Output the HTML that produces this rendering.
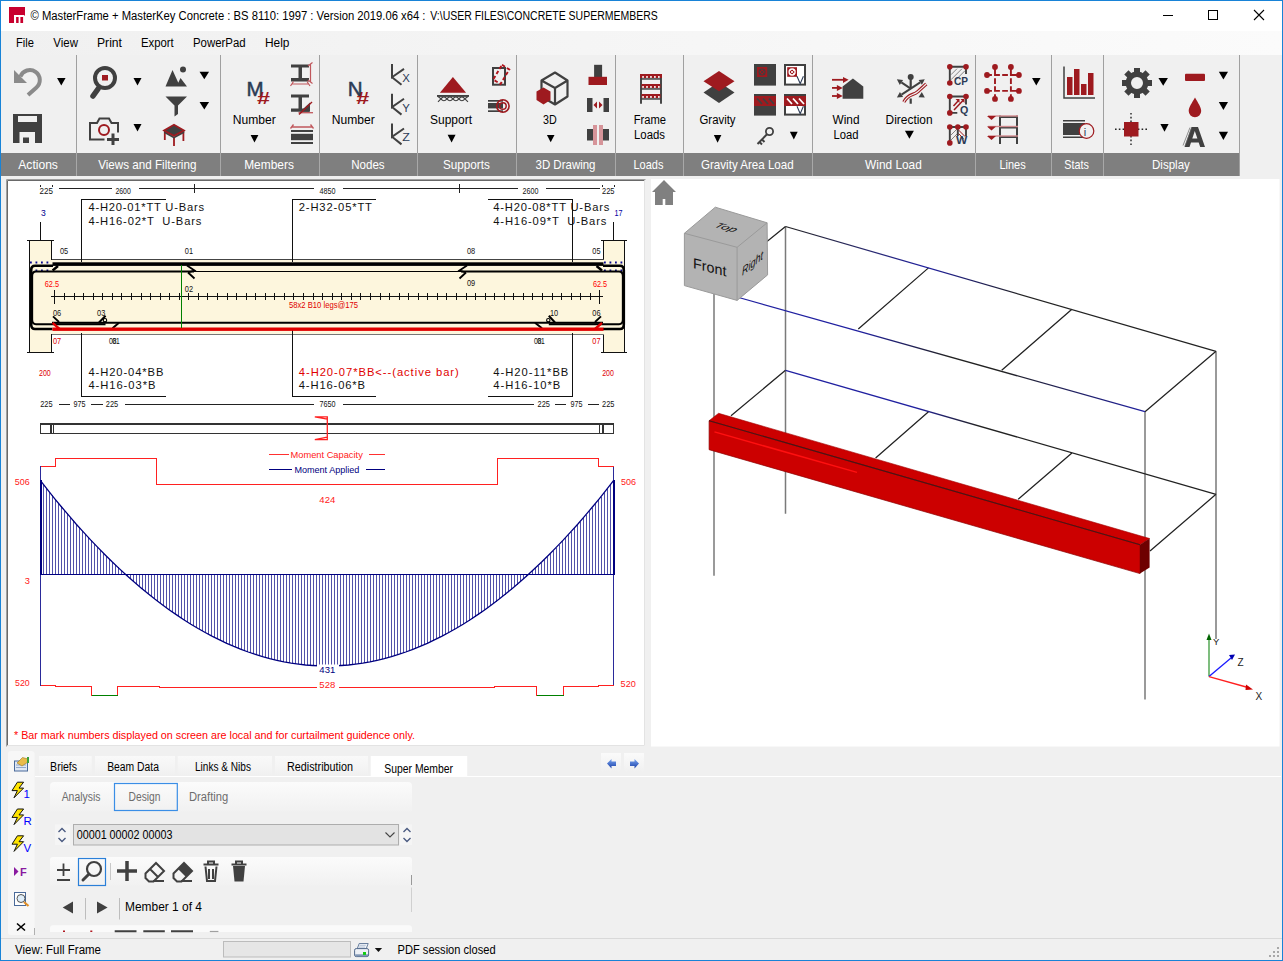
<!DOCTYPE html>
<html><head><meta charset="utf-8"><title>MasterFrame</title>
<style>
html,body{margin:0;padding:0;background:#f0f0f0;}
body{width:1283px;height:961px;overflow:hidden;position:relative;font-family:"Liberation Sans",sans-serif;}
svg{position:absolute;left:0;top:0;}
svg text{font-family:"Liberation Sans",sans-serif;white-space:pre;}
</style></head><body>
<svg width="1283" height="961" viewBox="0 0 1283 961">
<defs>
<linearGradient id="menugrad" x1="0" x2="1" y1="0" y2="0"><stop offset="0" stop-color="#f0f0f0"/><stop offset="1" stop-color="#fbfbfb"/></linearGradient>
<linearGradient id="tabgrad" x1="0" x2="0" y1="0" y2="1"><stop offset="0" stop-color="#f9f9f9"/><stop offset="1" stop-color="#f0f0f0"/></linearGradient>
<linearGradient id="btngrad" x1="0" x2="0" y1="0" y2="1"><stop offset="0" stop-color="#fafafa"/><stop offset="1" stop-color="#f0f0f0"/></linearGradient>
<linearGradient id="subgrad" x1="0" x2="0" y1="0" y2="1"><stop offset="0" stop-color="#fbfbfb"/><stop offset="1" stop-color="#f1f1f1"/></linearGradient>
<linearGradient id="arrowgrad" x1="0" x2="0" y1="0" y2="1"><stop offset="0" stop-color="#7aa6f0"/><stop offset="1" stop-color="#1a3fa8"/></linearGradient>
</defs>
<rect x="1" y="1" width="1281" height="30" fill="#fff"/>
<rect x="1" y="31" width="1281" height="24" fill="url(#menugrad)"/>
<rect x="1" y="55" width="1281" height="124" fill="#f0f0f0"/>
<rect x="1" y="153" width="1239" height="23" fill="#7f7f7f"/>
<rect x="1239" y="55" width="1" height="121" fill="#a0a0a0"/>
<rect x="76" y="55" width="1" height="98" fill="#a0a0a0"/>
<rect x="76" y="153" width="1" height="23" fill="#a8a8a8"/>
<rect x="220" y="55" width="1" height="98" fill="#a0a0a0"/>
<rect x="220" y="153" width="1" height="23" fill="#a8a8a8"/>
<rect x="319" y="55" width="1" height="98" fill="#a0a0a0"/>
<rect x="319" y="153" width="1" height="23" fill="#a8a8a8"/>
<rect x="417" y="55" width="1" height="98" fill="#a0a0a0"/>
<rect x="417" y="153" width="1" height="23" fill="#a8a8a8"/>
<rect x="516" y="55" width="1" height="98" fill="#a0a0a0"/>
<rect x="516" y="153" width="1" height="23" fill="#a8a8a8"/>
<rect x="615" y="55" width="1" height="98" fill="#a0a0a0"/>
<rect x="615" y="153" width="1" height="23" fill="#a8a8a8"/>
<rect x="683" y="55" width="1" height="98" fill="#a0a0a0"/>
<rect x="683" y="153" width="1" height="23" fill="#a8a8a8"/>
<rect x="812" y="55" width="1" height="98" fill="#a0a0a0"/>
<rect x="812" y="153" width="1" height="23" fill="#a8a8a8"/>
<rect x="975" y="55" width="1" height="98" fill="#a0a0a0"/>
<rect x="975" y="153" width="1" height="23" fill="#a8a8a8"/>
<rect x="1051" y="55" width="1" height="98" fill="#a0a0a0"/>
<rect x="1051" y="153" width="1" height="23" fill="#a8a8a8"/>
<rect x="1103" y="55" width="1" height="98" fill="#a0a0a0"/>
<rect x="1103" y="153" width="1" height="23" fill="#a8a8a8"/>
<rect x="0.5" y="0.5" width="1282" height="960" fill="none" stroke="#1883d7" stroke-width="1"/>
<path d="M9 7H25V16L24 15H14V23H9Z" fill="#c8002e"/><rect x="16.1" y="17" width="2.5" height="6" fill="#c8002e"/><rect x="20.4" y="17" width="2.7" height="6" fill="#c8002e"/>
<text x="30.5" y="20" font-size="12.5" fill="#000" textLength="395" lengthAdjust="spacingAndGlyphs">© MasterFrame + MasterKey Concrete : BS 8110: 1997 : Version 2019.06 x64 :</text>
<text x="430.2" y="20" font-size="12.5" fill="#000" textLength="227.6" lengthAdjust="spacingAndGlyphs">V:\USER FILES\CONCRETE SUPERMEMBERS</text>
<rect x="1163" y="15" width="10" height="1" fill="#000"/>
<rect x="1208.5" y="10.5" width="9" height="9" fill="none" stroke="#000" stroke-width="1"/>
<path d="M1254 10L1264 20M1264 10L1254 20" stroke="#000" stroke-width="1.1"/>
<text x="16" y="47" font-size="12.5" fill="#000" textLength="18" lengthAdjust="spacingAndGlyphs">File</text>
<text x="53.3" y="47" font-size="12.5" fill="#000" textLength="24.6" lengthAdjust="spacingAndGlyphs">View</text>
<text x="97" y="47" font-size="12.5" fill="#000" textLength="25" lengthAdjust="spacingAndGlyphs">Print</text>
<text x="141" y="47" font-size="12.5" fill="#000" textLength="32.7" lengthAdjust="spacingAndGlyphs">Export</text>
<text x="193" y="47" font-size="12.5" fill="#000" textLength="52.6" lengthAdjust="spacingAndGlyphs">PowerPad</text>
<text x="265" y="47" font-size="12.5" fill="#000" textLength="24.5" lengthAdjust="spacingAndGlyphs">Help</text>
<text x="18.3" y="168.8" font-size="12.2" fill="#fff" textLength="39.6" lengthAdjust="spacingAndGlyphs">Actions</text>
<text x="98.2" y="168.8" font-size="12.2" fill="#fff" textLength="98.2" lengthAdjust="spacingAndGlyphs">Views and Filtering</text>
<text x="244.2" y="168.8" font-size="12.2" fill="#fff" textLength="49.7" lengthAdjust="spacingAndGlyphs">Members</text>
<text x="351.2" y="168.8" font-size="12.2" fill="#fff" textLength="33.4" lengthAdjust="spacingAndGlyphs">Nodes</text>
<text x="442.9" y="168.8" font-size="12.2" fill="#fff" textLength="46.9" lengthAdjust="spacingAndGlyphs">Supports</text>
<text x="535.5" y="168.8" font-size="12.2" fill="#fff" textLength="60.0" lengthAdjust="spacingAndGlyphs">3D Drawing</text>
<text x="633.5" y="168.8" font-size="12.2" fill="#fff" textLength="29.9" lengthAdjust="spacingAndGlyphs">Loads</text>
<text x="701" y="168.8" font-size="12.2" fill="#fff" textLength="92.7" lengthAdjust="spacingAndGlyphs">Gravity Area Load</text>
<text x="865.1" y="168.8" font-size="12.2" fill="#fff" textLength="56.7" lengthAdjust="spacingAndGlyphs">Wind Load</text>
<text x="999.4" y="168.8" font-size="12.2" fill="#fff" textLength="26.3" lengthAdjust="spacingAndGlyphs">Lines</text>
<text x="1064.3" y="168.8" font-size="12.2" fill="#fff" textLength="24.6" lengthAdjust="spacingAndGlyphs">Stats</text>
<text x="1152" y="168.8" font-size="12.2" fill="#fff" textLength="37.9" lengthAdjust="spacingAndGlyphs">Display</text>
<path d="M14 70V83H27Z" fill="#8a8a8a"/>
<path d="M20.4 76.6A10 10 0 1 1 36.2 87.7L28 95" fill="none" stroke="#8a8a8a" stroke-width="4"/>
<path d="M57.05 78h8.5l-4.25 7.5z" fill="#000"/>
<path d="M13 114H42V143H13Z M18 116V122H37V116Z M19.5 132V143H35V132Z" fill="#404040" fill-rule="evenodd"/>
<rect x="23" y="137.5" width="6" height="5.5" fill="#404040"/>
<circle cx="105" cy="78" r="10" fill="none" stroke="#404040" stroke-width="4"/>
<path d="M98 89L93 96" stroke="#404040" stroke-width="5.5" stroke-linecap="round"/>
<rect x="102" y="75" width="6" height="5.5" fill="#9e1a1f"/>
<path d="M133.5 78h8l-4.0 7.5z" fill="#000"/>
<path d="M104.5 139.5H90V123H97L99.5 118.5H109L111.5 123H118V132.5" fill="none" stroke="#404040" stroke-width="2"/>
<circle cx="104" cy="130" r="5" fill="none" stroke="#9e1a1f" stroke-width="2"/>
<path d="M107 139.5H119M113 133.5V145" stroke="#404040" stroke-width="3"/>
<path d="M133.5 124h8l-4.0 7.5z" fill="#000"/>
<path d="M165.5 86.5L172.5 70L180 86.5Z M176.5 86.5L180.5 78L187 86.5Z" fill="#404040"/>
<circle cx="183" cy="69.5" r="3" fill="#404040"/>
<path d="M199.55 71.7h9.5l-4.75 7.5z" fill="#000"/>
<path d="M165.5 96.5H187L178 105.5V114L174.5 116.5V105.5Z" fill="#404040"/>
<path d="M199.55 102h9.5l-4.75 7.5z" fill="#000"/>
<path d="M164.8 131V140M183.4 131V141M174 137V146" stroke="#9e1a1f" stroke-width="1.8"/>
<path d="M164 130.5L174 136.5L184.2 130.5V133L174 138.5L164 133Z" fill="#404040"/>
<path d="M174 124.8L184 130.4L174 135.8L164 130.4Z" fill="#404040" stroke="#9e1a1f" stroke-width="1.7"/>
<text x="246.5" y="95.8" font-size="20.5" fill="#2b3a55" stroke="#2b3a55" stroke-width="0.5">M</text>
<text x="257" y="103.8" font-size="17" fill="#9e1a1f" textLength="13" lengthAdjust="spacingAndGlyphs" font-weight="bold">#</text>
<text x="232.7" y="124" font-size="12.5" fill="#000" textLength="43" lengthAdjust="spacingAndGlyphs">Number</text>
<path d="M250.6 135h7.8l-3.9 7.6z" fill="#000"/>
<path d="M291 64.5H309V67.5H302V78H309V81.5H291V78H298.5V67.5H291Z" fill="#404040"/>
<path d="M310.5 64.5V81.5M308 66L312.5 62.5M308 80L312.5 83.5M291.5 84H309M293.5 81.5L290.5 86M307 81.5L310 86" stroke="#c0575c" stroke-width="1.2" fill="none"/>
<path d="M291 94.5H309V97.5H302V108.5H309V111.7H291V108.5H298.5V97.5H291Z" fill="#404040"/>
<path d="M300 111.7L310 102.5V111.7Z" fill="#404040"/>
<path d="M298.5 112.7H313" stroke="#c0575c" stroke-width="1.3"/><path d="M299 114.5L312 102" stroke="#9e1a1f" stroke-width="1.4"/>
<path d="M291.5 127H312.5M293.5 124.5L290.5 128.5M310.5 124.5L313.5 128.5" stroke="#c0575c" stroke-width="1.3" fill="none"/>
<rect x="291" y="130" width="22" height="2" fill="#404040"/><rect x="291" y="133.8" width="22" height="6.4" fill="#404040"/><rect x="291" y="142" width="22" height="2" fill="#404040"/>
<text x="347.8" y="96" font-size="20.5" fill="#2b3a55" stroke="#2b3a55" stroke-width="0.5">N</text>
<text x="356.3" y="103.8" font-size="17" fill="#9e1a1f" textLength="13" lengthAdjust="spacingAndGlyphs" font-weight="bold">#</text>
<text x="331.8" y="124" font-size="12.5" fill="#000" textLength="43" lengthAdjust="spacingAndGlyphs">Number</text>
<path d="M392 64.0V77.2L404 68.9M392 77.2L401.5 84.8" fill="none" stroke="#404040" stroke-width="2"/>
<text x="402.3" y="81.8" font-size="11.5" fill="#2b3a55" textLength="7.6" lengthAdjust="spacingAndGlyphs">X</text>
<path d="M392 93.8V107.0L404 98.7M392 107.0L401.5 114.6" fill="none" stroke="#404040" stroke-width="2"/>
<text x="402.3" y="111.6" font-size="11.5" fill="#2b3a55" textLength="7.6" lengthAdjust="spacingAndGlyphs">Y</text>
<path d="M392 123.6V136.8L404 128.5M392 136.8L401.5 144.4" fill="none" stroke="#404040" stroke-width="2"/>
<text x="402.3" y="141.4" font-size="11.5" fill="#2b3a55" textLength="7.6" lengthAdjust="spacingAndGlyphs">Z</text>
<path d="M439.9 92.8L452.9 76.9L466.1 92.8Z" fill="#9e1a1f"/>
<rect x="437" y="95" width="32" height="1.9" fill="#404040"/>
<path d="M438 101.8L440.9 98.8Q443.9 102.6 446.9 98.8Q449.9 102.6 452.9 98.8Q455.9 102.6 458.9 98.8Q461.9 102.6 464.9 98.8L468 101.8M438 96.5L440.9 98.8Q443.9 95 446.9 98.8Q449.9 95 452.9 98.8Q455.9 95 458.9 98.8Q461.9 95 464.9 98.8L468 96.5" fill="none" stroke="#404040" stroke-width="1.1"/>
<text x="430" y="124" font-size="12.5" fill="#000" textLength="42" lengthAdjust="spacingAndGlyphs">Support</text>
<path d="M447.6 134.7h8l-4.0 7.8z" fill="#000"/>
<rect x="493" y="68" width="12" height="16.7" fill="none" stroke="#404040" stroke-width="2"/>
<path d="M502 64.8L509.3 69.5L500.5 84L493.2 79.5Z" fill="none" stroke="#b0141c" stroke-width="1.9" stroke-dasharray="3.6 2.2"/>
<rect x="488" y="100" width="15" height="1.7" fill="#404040"/><rect x="488" y="103" width="15" height="5.4" fill="#404040"/><rect x="488" y="110.3" width="15" height="1.7" fill="#404040"/>
<circle cx="502.9" cy="106" r="6.2" fill="none" stroke="#9e1a1f" stroke-width="1.6"/><circle cx="502.9" cy="106" r="3.3" fill="none" stroke="#9e1a1f" stroke-width="1.5"/>
<path d="M541.5 80.5L555 72.5L567.5 80.5V96.5L555 104.5L541.5 96.5Z M541.5 80.5L555 88V104.5 M555 88L567.5 80.5" fill="none" stroke="#404040" stroke-width="2.2" stroke-linejoin="round"/>
<path d="M543.5 87.5L550.5 91.5V100L543.5 104.5L536.5 100V91.5Z" fill="#9e1a1f"/>
<text x="543" y="124" font-size="12.5" fill="#000" textLength="13.7" lengthAdjust="spacingAndGlyphs">3D</text>
<path d="M546.9000000000001 135h7.6l-3.8 7.3z" fill="#000"/>
<rect x="594.1" y="64.8" width="8" height="12.5" fill="#404040"/><rect x="588.5" y="76.8" width="18.5" height="8.2" fill="#9e1a1f"/>
<rect x="587" y="98" width="5.5" height="14" fill="#404040"/><rect x="603.5" y="98" width="5.5" height="14" fill="#404040"/><path d="M593.5 105L597 101.5V108.5Z M602.5 105L599 101.5V108.5Z" fill="#9e1a1f"/>
<rect x="587" y="129" width="22" height="11.5" fill="#404040"/><rect x="593" y="125" width="4" height="20" fill="#d69499"/><rect x="599" y="125" width="4" height="20" fill="#d69499"/><rect x="597" y="125" width="2" height="20" fill="#f0f0f0"/>
<path d="M641 78V103.8M661 78V103.8" stroke="#404040" stroke-width="1.9"/>
<rect x="640" y="74" width="22" height="4" fill="#9e1a1f"/>
<rect x="642.20" y="76.1" width="1.7" height="1.7" fill="#fff"/>
<rect x="646.15" y="76.1" width="1.7" height="1.7" fill="#fff"/>
<rect x="650.10" y="76.1" width="1.7" height="1.7" fill="#fff"/>
<rect x="654.05" y="76.1" width="1.7" height="1.7" fill="#fff"/>
<rect x="658.00" y="76.1" width="1.7" height="1.7" fill="#fff"/>
<rect x="641" y="78.2" width="20" height="1.5" fill="#404040"/>
<rect x="641.5" y="84" width="19" height="4" fill="#9e1a1f"/>
<rect x="642.20" y="86.1" width="1.7" height="1.7" fill="#fff"/>
<rect x="646.15" y="86.1" width="1.7" height="1.7" fill="#fff"/>
<rect x="650.10" y="86.1" width="1.7" height="1.7" fill="#fff"/>
<rect x="654.05" y="86.1" width="1.7" height="1.7" fill="#fff"/>
<rect x="658.00" y="86.1" width="1.7" height="1.7" fill="#fff"/>
<rect x="641" y="88.2" width="20" height="1.5" fill="#404040"/>
<rect x="641.5" y="94" width="19" height="4" fill="#9e1a1f"/>
<rect x="642.20" y="96.1" width="1.7" height="1.7" fill="#fff"/>
<rect x="646.15" y="96.1" width="1.7" height="1.7" fill="#fff"/>
<rect x="650.10" y="96.1" width="1.7" height="1.7" fill="#fff"/>
<rect x="654.05" y="96.1" width="1.7" height="1.7" fill="#fff"/>
<rect x="658.00" y="96.1" width="1.7" height="1.7" fill="#fff"/>
<rect x="641" y="98.2" width="20" height="1.5" fill="#404040"/>
<text x="633.7" y="123.6" font-size="12.5" fill="#000" textLength="32.3" lengthAdjust="spacingAndGlyphs">Frame</text>
<text x="634" y="138.9" font-size="12.5" fill="#000" textLength="31" lengthAdjust="spacingAndGlyphs">Loads</text>
<path d="M703.5 92.5L719 82L734.5 92.5L719 103Z" fill="#404040"/>
<path d="M703.5 81.3L719 71L734.5 81.3L719 91.3Z" fill="#9e1a1f"/>
<text x="699.5" y="124" font-size="12.5" fill="#000" textLength="36" lengthAdjust="spacingAndGlyphs">Gravity</text>
<path d="M713.85 135h7.5l-3.75 7.7z" fill="#000"/>
<rect x="754" y="64" width="22" height="21.6" fill="#404040"/><rect x="757" y="67" width="10.2" height="10" fill="#9e1a1f"/><circle cx="762.1" cy="72" r="3" fill="none" stroke="#404040" stroke-width="1.1"/><path d="M760 69.9L764.2 74.1M764.2 69.9L760 74.1" stroke="#404040" stroke-width="0.9"/>
<rect x="785" y="65" width="20" height="19.6" fill="#fff" stroke="#404040" stroke-width="2"/><rect x="787.2" y="67.2" width="9.8" height="9.6" fill="#9e1a1f"/><circle cx="792.1" cy="72" r="3" fill="none" stroke="#fff" stroke-width="1.3"/><path d="M790.2 70.1L794 73.9M794 70.1L790.2 73.9" stroke="#fff" stroke-width="0.9"/>
<path d="M797 76.3L800.2 83.7L803.4 76.3" fill="none" stroke="#2b3a55" stroke-width="1.1"/>
<rect x="754" y="94" width="22" height="21.6" fill="#404040"/><rect x="754" y="96" width="22" height="10" fill="#9e1a1f"/>
<path d="M757 98.5L762 104M763 98.5L768 104M769 98.5L774 104" stroke="#404040" stroke-width="1.8"/>
<rect x="785" y="95" width="20" height="19.6" fill="#fff" stroke="#404040" stroke-width="2"/><rect x="784" y="96" width="22" height="10" fill="#9e1a1f"/>
<path d="M787 98.5L792 104M793 98.5L798 104M799 98.5L804 104" stroke="#fff" stroke-width="1.8"/>
<path d="M797 106.3L800.2 113.7L803.4 106.3" fill="none" stroke="#2b3a55" stroke-width="1.1"/>
<circle cx="769.5" cy="131.5" r="3.6" fill="none" stroke="#404040" stroke-width="1.8"/><path d="M767 134.3L757.5 144M759.5 142L762 144.5M762 139.5L764.5 142" stroke="#404040" stroke-width="2"/>
<path d="M789.9 131.8h7.8l-3.9 7.8z" fill="#000"/>
<path d="M842.6 98.8V86.6L852.9 78.5L863.3 86.6V98.8Z" fill="#404040"/>
<path d="M832 79.8H844" stroke="#9e1a1f" stroke-width="1.8"/><path d="M843 76.9L848.6 79.8L843 83Z" fill="#9e1a1f"/>
<path d="M832 87.9H838" stroke="#9e1a1f" stroke-width="1.8"/><path d="M836.9 84.9L842.8 87.9L836.9 90.9Z" fill="#9e1a1f"/>
<path d="M832 96H838" stroke="#9e1a1f" stroke-width="1.8"/><path d="M836.9 93L842.8 96L836.9 99Z" fill="#9e1a1f"/>
<text x="832.5" y="124" font-size="12.5" fill="#000" textLength="27" lengthAdjust="spacingAndGlyphs">Wind</text>
<text x="833.5" y="138.9" font-size="12.5" fill="#000" textLength="25" lengthAdjust="spacingAndGlyphs">Load</text>
<path d="M910.7 77V88.7M910.7 98.4V103.7" stroke="#404040" stroke-width="2.2"/>
<circle cx="910.7" cy="76.9" r="3" fill="#404040"/>
<path d="M910.7 88.7L901.4 82.4" stroke="#404040" stroke-width="2"/>
<path d="M896.9 79.3L903.1 79.9L899.8 84.9Z" fill="#404040"/>
<path d="M910.7 88.7L920.2 82.4" stroke="#404040" stroke-width="2"/>
<path d="M924.8 79.3L921.9 84.8L918.6 79.9Z" fill="#404040"/>
<path d="M910.7 88.7L901.5 94.6" stroke="#404040" stroke-width="2"/>
<path d="M896.9 97.6L899.9 92.1L903.1 97.1Z" fill="#404040"/>
<path d="M924.8 97.6L918.5 97.2L921.8 92.1Z" fill="#404040"/>
<path d="M903.8 102C909 93 913 96 918 91.5S924 86 926.3 84" fill="none" stroke="#9e1a1f" stroke-width="3.4"/><path d="M903.8 102C909 93 913 96 918 91.5S924 86 926.3 84" fill="none" stroke="#f0f0f0" stroke-width="1.2"/>
<text x="885.6" y="124" font-size="12.5" fill="#000" textLength="47" lengthAdjust="spacingAndGlyphs">Direction</text>
<path d="M904.9 130.7h9l-4.5 8z" fill="#000"/>
<path d="M951 74.7L957 68.7M951 79.7L962 68.7M956 79.7L965 70.7" stroke="#777" stroke-width="0.9"/>
<path d="M949.8 83.0V66.7H966V74.0" fill="none" stroke="#404040" stroke-width="1.9"/>
<circle cx="949.8" cy="66.7" r="2.8" fill="#9e1a1f"/>
<circle cx="966" cy="66.7" r="2.8" fill="#9e1a1f"/>
<circle cx="949.8" cy="83.0" r="2.8" fill="#9e1a1f"/>
<text x="954" y="84.5" font-size="11.5" fill="#2b3a55" textLength="14" lengthAdjust="spacingAndGlyphs" font-weight="bold">CP</text>
<path d="M957.3 112.9H949.8V96.5H966V104.5" fill="none" stroke="#404040" stroke-width="1.9"/>
<path d="M953.5 106.0L958.5 100.5M954 110.0L963 100.5" stroke="#9e1a1f" stroke-width="1.5"/><path d="M955.5 99.0L959.5 99.0L959.5 103.0Z M960.5 99.0L964.5 99.0L964.5 103.0Z" fill="#9e1a1f"/>
<circle cx="949.8" cy="96.5" r="2.8" fill="#9e1a1f"/>
<circle cx="966" cy="96.5" r="2.8" fill="#9e1a1f"/>
<circle cx="949.8" cy="112.9" r="2.8" fill="#9e1a1f"/>
<text x="960" y="114" font-size="11.5" fill="#2b3a55" textLength="8.3" lengthAdjust="spacingAndGlyphs" font-weight="bold">Q</text>
<path d="M951 135L957 129M951 140L957 134" stroke="#777" stroke-width="0.9"/><path d="M958.5 130L965 136.5M958.5 133.5L963.5 138.5" stroke="#9e1a1f" stroke-width="1"/>
<path d="M949.8 142.9V127H966V136M957.8 127V136" fill="none" stroke="#404040" stroke-width="1.9"/>
<circle cx="949.8" cy="127" r="2.8" fill="#9e1a1f"/>
<circle cx="966" cy="127" r="2.8" fill="#9e1a1f"/>
<circle cx="949.8" cy="142.9" r="2.8" fill="#9e1a1f"/>
<circle cx="957.8" cy="127" r="2.8" fill="#9e1a1f"/>
<text x="955.9" y="144.3" font-size="11.5" fill="#2b3a55" textLength="11.3" lengthAdjust="spacingAndGlyphs" font-weight="bold">W</text>
<circle cx="995" cy="67" r="2.9" fill="#9e1a1f"/>
<circle cx="1010.9" cy="67" r="2.9" fill="#9e1a1f"/>
<circle cx="987" cy="75" r="2.9" fill="#9e1a1f"/>
<circle cx="1018.9" cy="75" r="2.9" fill="#9e1a1f"/>
<circle cx="987" cy="90.9" r="2.9" fill="#9e1a1f"/>
<circle cx="1018.9" cy="90.9" r="2.9" fill="#9e1a1f"/>
<circle cx="995" cy="98.9" r="2.9" fill="#9e1a1f"/>
<circle cx="1010.9" cy="98.9" r="2.9" fill="#9e1a1f"/>
<path d="M995 67V75H999.9M987 75H991.9M1002.2 75H1007.9M1010.9 67V75H1018.9M995 78.3V83.9M1010.9 78.3V83.9M995 86.2V90.9H999.9M987 90.9H991.9M1002.2 90.9H1007.9M1010.9 86.2V90.9H1018.9M995 94.2V98.9M1010.9 94.2V98.9" fill="none" stroke="#9e1a1f" stroke-width="1.9"/>
<path d="M1032.05 77.9h8.5l-4.25 7.6z" fill="#000"/>
<path d="M1000 115.5V144M1017 115.5V144M1000 117H1017M1000 127.5H1017M1000 137H1017" stroke="#404040" stroke-width="2"/>
<path d="M988 116H1018" stroke="#d08a8e" stroke-width="1.4"/><path d="M987 116H996L991.5 120Z" fill="#9e1a1f"/>
<path d="M988 126.5H1018" stroke="#d08a8e" stroke-width="1.4"/><path d="M987 126.5H996L991.5 130.5Z" fill="#9e1a1f"/>
<path d="M988 136H1018" stroke="#d08a8e" stroke-width="1.4"/><path d="M987 136H996L991.5 140Z" fill="#9e1a1f"/>
<path d="M1064 66.5V98H1095" fill="none" stroke="#404040" stroke-width="1.5"/>
<rect x="1067" y="77" width="5.5" height="18" fill="#9e1a1f"/>
<rect x="1074" y="69" width="5.5" height="26" fill="#9e1a1f"/>
<rect x="1081" y="84" width="5.5" height="11" fill="#9e1a1f"/>
<rect x="1088" y="73" width="5.5" height="22" fill="#9e1a1f"/>
<rect x="1063" y="120" width="22" height="1.5" fill="#404040"/><rect x="1063" y="123" width="22" height="12" fill="#404040"/><rect x="1063" y="136.5" width="22" height="1.5" fill="#404040"/>
<circle cx="1086.5" cy="131" r="7.3" fill="#f0f0f0" stroke="#9e1a1f" stroke-width="1.2"/>
<text x="1083.8" y="136" font-size="11" fill="#2b3a55">i</text>
<rect x="1134" y="68" width="6" height="6" fill="#404040" transform="rotate(0 1137 83)"/><rect x="1134" y="68" width="6" height="6" fill="#404040" transform="rotate(45 1137 83)"/><rect x="1134" y="68" width="6" height="6" fill="#404040" transform="rotate(90 1137 83)"/><rect x="1134" y="68" width="6" height="6" fill="#404040" transform="rotate(135 1137 83)"/><rect x="1134" y="68" width="6" height="6" fill="#404040" transform="rotate(180 1137 83)"/><rect x="1134" y="68" width="6" height="6" fill="#404040" transform="rotate(225 1137 83)"/><rect x="1134" y="68" width="6" height="6" fill="#404040" transform="rotate(270 1137 83)"/><rect x="1134" y="68" width="6" height="6" fill="#404040" transform="rotate(315 1137 83)"/>
<circle cx="1137" cy="83" r="8.7" fill="none" stroke="#404040" stroke-width="5.4"/>
<path d="M1158.45 78h9.5l-4.75 7.8z" fill="#000"/>
<path d="M1131 113V145M1115 129.3H1147" stroke="#222" stroke-width="1.4" stroke-dasharray="1.6 2.2"/>
<rect x="1124" y="122" width="14.5" height="14.5" fill="#9e1a1f"/>
<path d="M1160.4 124h8.2l-4.1 7.8z" fill="#000"/>
<rect x="1185" y="73.7" width="20" height="7.2" rx="1" fill="#9e1a1f"/>
<path d="M1218.8000000000002 71.8h9.2l-4.6 7.8z" fill="#000"/>
<path d="M1195 97.5C1192 103 1188.7 107 1188.7 111A6.2 6.2 0 0 0 1201.2 111C1201.2 107 1198 103 1195 97.5Z" fill="#9e1a1f"/>
<path d="M1218.8000000000002 102h9.2l-4.6 8z" fill="#000"/>
<path d="M1184.5 147L1191.5 127H1198L1205 147H1200.2L1198.7 142.5H1191L1189.5 147Z M1192.3 138.5H1197.4L1194.8 131Z" fill="#404040" fill-rule="evenodd"/>
<path d="M1183 145.5L1190 127.5M1185 146L1191.5 128" stroke="#666" stroke-width="0.7"/>
<path d="M1218.8000000000002 131.8h9.2l-4.6 8.2z" fill="#000"/>
<rect x="6" y="179" width="639" height="567" fill="#fff"/>
<path d="M6 746V179H645" fill="none" stroke="#a0a0a0" stroke-width="1" transform="translate(0.5 0.5)"/>
<path d="M7 745V180H644" fill="none" stroke="#696969" stroke-width="1" transform="translate(0.5 0.5)"/>
<path d="M644 180V745H7" fill="none" stroke="#e3e3e3" stroke-width="1" transform="translate(0.5 0.5)"/>
<g shape-rendering="crispEdges">
<path d="M58.5 188.5H112M138.5 188.5H314M342.5 188.5H518M545.5 188.5H599.5" stroke="#222" stroke-width="1.2"/>
<path d="M194.5 184V192.5M459.5 184V192.5" stroke="#222" stroke-width="1.2"/>
<path d="M40.5 184.8V186.8M52.5 184.8V186.8M602.5 184.8V186.8M614.5 184.8V186.8" stroke="#222" stroke-width="1"/>
</g>
<text x="39.6" y="194" font-size="8.6" fill="#111" textLength="13.4" lengthAdjust="spacingAndGlyphs">225</text>
<text x="115.4" y="194" font-size="8.6" fill="#111" textLength="15.4" lengthAdjust="spacingAndGlyphs">2600</text>
<text x="319.5" y="194" font-size="8.6" fill="#111" textLength="16" lengthAdjust="spacingAndGlyphs">4850</text>
<text x="522.5" y="194" font-size="8.6" fill="#111" textLength="15.9" lengthAdjust="spacingAndGlyphs">2600</text>
<text x="602" y="194" font-size="8.6" fill="#111" textLength="12.5" lengthAdjust="spacingAndGlyphs">225</text>
<path d="M58.5 404.5H69.5M91.3 404.5H103M124.8 404.5H314M342.5 404.5H533.5M555 404.5H566.2M587.6 404.5H599" stroke="#222" stroke-width="1.2" shape-rendering="crispEdges"/>
<text x="40.2" y="407" font-size="8.6" fill="#111" textLength="12.4" lengthAdjust="spacingAndGlyphs">225</text>
<text x="73.4" y="407" font-size="8.6" fill="#111" textLength="12" lengthAdjust="spacingAndGlyphs">975</text>
<text x="105.8" y="407" font-size="8.6" fill="#111" textLength="12.4" lengthAdjust="spacingAndGlyphs">225</text>
<text x="319.5" y="407" font-size="8.6" fill="#111" textLength="16" lengthAdjust="spacingAndGlyphs">7650</text>
<text x="537.5" y="407" font-size="8.6" fill="#111" textLength="12.4" lengthAdjust="spacingAndGlyphs">225</text>
<text x="570.5" y="407" font-size="8.6" fill="#111" textLength="12" lengthAdjust="spacingAndGlyphs">975</text>
<text x="602" y="407" font-size="8.6" fill="#111" textLength="12.4" lengthAdjust="spacingAndGlyphs">225</text>
<rect x="29.5" y="240.5" width="22.200000000000003" height="111.6" fill="#fdf6dd"/>
<rect x="603" y="240.5" width="21.700000000000045" height="111.6" fill="#fdf6dd"/>
<rect x="29.5" y="259.5" width="595.2" height="74.5" fill="#fdf6dd"/>
<g shape-rendering="crispEdges" stroke="#111" fill="none">
<path d="M29.5 240.5V352.5M51.5 240.5V259.5M51.5 333.5V352.5M27 240.5H54M27 352.5H54" stroke-width="1.3"/>
<path d="M603.5 240.5V259.5M603.5 333.5V352.5M624.5 240.5V352.5M600.5 240.5H627M600.5 352.5H627" stroke-width="1.3"/>
<path d="M40.5 222V240.5M613.5 221.5V240.5" stroke-width="1.2"/>
<path d="M51.5 259.5H603.5" stroke-width="1.2" stroke="#444"/><path d="M51.5 334.5H603.5" stroke-width="1.2" stroke="#777"/>
<path d="M81.5 262V199.5H166M292.5 262V199.5H376M488 199.5H572.5V262" stroke-width="1.3"/>
<path d="M81.5 333V396.5H166M292.5 329V396.5H376M488 396.5H572.5V333" stroke-width="1.3"/>
</g>
<text x="41" y="215.8" font-size="8.6" fill="#000090">3</text>
<text x="614.5" y="215.5" font-size="8.6" fill="#0000a0" textLength="8" lengthAdjust="spacingAndGlyphs">17</text>
<path d="M30 262.5H51M30 270.5H51" stroke="#0a0a90" stroke-width="2" stroke-dasharray="1.8 3.7"/>
<path d="M604 262.5H624M604 270.5H624" stroke="#0a0a90" stroke-width="2" stroke-dasharray="1.8 3.7"/>
<rect x="52.5" y="262.3" width="551" height="3.6" fill="#000"/>
<path d="M53 265.8H35Q31.2 265.8 31.2 270V324.5Q31.2 329 35 329H52.5" fill="none" stroke="#000" stroke-width="2.6"/>
<path d="M57 271.5H36Q32.2 271.5 32.2 276V319.5Q32.2 324.2 36 324.2H105.5" fill="none" stroke="#000" stroke-width="1.9"/>
<path d="M603 265.8H620Q623.8 265.8 623.8 270V324.5Q623.8 329 620 329H603" fill="none" stroke="#000" stroke-width="2.6"/>
<path d="M598 271.5H619Q622.8 271.5 622.8 276V319.5Q622.8 324.2 619 324.2H548.8" fill="none" stroke="#000" stroke-width="1.9"/>
<path d="M52.6 270.5L58 266" stroke="#000" stroke-width="2.4"/>
<path d="M602 270.5L596.5 266" stroke="#000" stroke-width="2.4"/>
<path d="M57 271.5H194M461 271.5H598" stroke="#000" stroke-width="2"/>
<path d="M194 271.5H461" stroke="#000" stroke-width="1"/>
<path d="M187 265.5L194.5 270.5L188 272.5M188 272.5L194.5 278.5" fill="none" stroke="#000" stroke-width="1.8"/>
<path d="M467 265.5L459.5 270.5L466 272.5M466 272.5L459.5 278.5" fill="none" stroke="#000" stroke-width="1.8"/>
<path d="M52 322.8H603" stroke="#000" stroke-width="1.9"/>
<path d="M53 316.3L59 322" stroke="#000" stroke-width="1.8"/>
<path d="M601 316.3L595 322" stroke="#000" stroke-width="1.8"/>
<path d="M99 322.5L105.6 315.8" stroke="#000" stroke-width="2"/><circle cx="105" cy="320.2" r="1.7" fill="none" stroke="#000" stroke-width="1.1"/>
<path d="M555 322.5L548.8 315.8" stroke="#000" stroke-width="2"/><circle cx="548.3" cy="320.2" r="1.7" fill="none" stroke="#000" stroke-width="1.1"/>
<path d="M112.5 328.3L119 322.8M542 328.3L535 322.8" stroke="#000" stroke-width="2"/>
<rect x="52.5" y="327.5" width="551" height="3.4" fill="#e00000"/>
<path d="M52.6 322.8L59.5 329M602 322.8L595 329" stroke="#e00000" stroke-width="2.4"/>
<g shape-rendering="crispEdges" stroke="#111">
<path d="M51 296.5H603" stroke-width="1.2"/>
<path d="M54.5 289.5V304M64.5 293V300M74.5 293V300M83.5 293V300M93.5 293V300M102.5 293V300M112.5 293V300M121.5 293V300M131.5 293V300M141.5 293V300M150.5 293V300M160.5 293V300M169.5 293V300M179.5 293V300M188.5 293V300M198.5 293V300M207.5 293V300M217.5 293V300M227.5 293V300M236.5 293V300M246.5 293V300M255.5 293V300M265.5 293V300M274.5 293V300M284.5 293V300M293.5 293V300M303.5 293V300M313.5 293V300M322.5 293V300M332.5 293V300M341.5 293V300M351.5 293V300M360.5 293V300M370.5 293V300M380.5 293V300M389.5 293V300M399.5 293V300M408.5 293V300M418.5 293V300M427.5 293V300M437.5 293V300M446.5 293V300M456.5 293V300M466.5 293V300M475.5 293V300M485.5 293V300M494.5 293V300M504.5 293V300M513.5 293V300M523.5 293V300M532.5 293V300M542.5 293V300M552.5 293V300M561.5 293V300M571.5 293V300M580.5 293V300M590.5 293V300M599.5 289.5V304" stroke-width="1"/>
</g>
<path d="M181.5 264.5V328" stroke="#008000" stroke-width="1.2" shape-rendering="crispEdges"/>
<text x="44.8" y="287" font-size="8.6" fill="#ff0000" textLength="14.2" lengthAdjust="spacingAndGlyphs">62.5</text>
<text x="592.9" y="287" font-size="8.6" fill="#ff0000" textLength="14.2" lengthAdjust="spacingAndGlyphs">62.5</text>
<text x="60" y="254.3" font-size="8.6" fill="#111" textLength="8.2" lengthAdjust="spacingAndGlyphs">05</text>
<text x="184.8" y="254.3" font-size="8.6" fill="#111" textLength="8.2" lengthAdjust="spacingAndGlyphs">01</text>
<text x="467" y="254.3" font-size="8.6" fill="#111" textLength="8.2" lengthAdjust="spacingAndGlyphs">08</text>
<text x="592.3" y="254.3" font-size="8.6" fill="#111" textLength="8.2" lengthAdjust="spacingAndGlyphs">05</text>
<text x="184.8" y="292" font-size="8.6" fill="#111" textLength="8.2" lengthAdjust="spacingAndGlyphs">02</text>
<text x="467" y="285.5" font-size="8.6" fill="#111" textLength="8.2" lengthAdjust="spacingAndGlyphs">09</text>
<text x="53" y="316" font-size="8.6" fill="#111" textLength="8.2" lengthAdjust="spacingAndGlyphs">06</text>
<text x="97.1" y="316" font-size="8.6" fill="#111" textLength="8.2" lengthAdjust="spacingAndGlyphs">03</text>
<text x="550" y="316" font-size="8.6" fill="#111" textLength="8.2" lengthAdjust="spacingAndGlyphs">10</text>
<text x="592.3" y="316" font-size="8.6" fill="#111" textLength="8.2" lengthAdjust="spacingAndGlyphs">06</text>
<text x="53" y="343.8" font-size="8.6" fill="#e00000" textLength="8.2" lengthAdjust="spacingAndGlyphs">07</text>
<text x="592.3" y="343.8" font-size="8.6" fill="#e00000" textLength="8.2" lengthAdjust="spacingAndGlyphs">07</text>
<text x="109" y="343.8" font-size="8.6" fill="#111" textLength="7.6" lengthAdjust="spacingAndGlyphs">08</text>
<text x="112.2" y="343.8" font-size="8.6" fill="#111" textLength="7.4" lengthAdjust="spacingAndGlyphs">01</text>
<text x="534" y="343.8" font-size="8.6" fill="#111" textLength="7.6" lengthAdjust="spacingAndGlyphs">08</text>
<text x="537.2" y="343.8" font-size="8.6" fill="#111" textLength="7.4" lengthAdjust="spacingAndGlyphs">01</text>
<text x="289" y="308" font-size="8.6" fill="#e00000" textLength="69" lengthAdjust="spacingAndGlyphs">58x2 B10 legs@175</text>
<text x="39" y="375.5" font-size="8.6" fill="#e00000" textLength="11.7" lengthAdjust="spacingAndGlyphs">200</text>
<text x="602.2" y="375.5" font-size="8.6" fill="#e00000" textLength="11.7" lengthAdjust="spacingAndGlyphs">200</text>
<text x="88.4" y="211" font-size="11.2" fill="#111" textLength="115.6" lengthAdjust="spacing">4-H20-01*TT U-Bars</text>
<text x="88.4" y="224.6" font-size="11.2" fill="#111" textLength="113" lengthAdjust="spacing">4-H16-02*T  U-Bars</text>
<text x="298.75" y="211" font-size="11.2" fill="#111" textLength="73.2" lengthAdjust="spacing">2-H32-05*TT</text>
<text x="493.3" y="211" font-size="11.2" fill="#111" textLength="116" lengthAdjust="spacing">4-H20-08*TT U-Bars</text>
<text x="493.3" y="224.6" font-size="11.2" fill="#111" textLength="113" lengthAdjust="spacing">4-H16-09*T  U-Bars</text>
<text x="88.4" y="376" font-size="11.2" fill="#111" textLength="75" lengthAdjust="spacing">4-H20-04*BB</text>
<text x="88.4" y="388.7" font-size="11.2" fill="#111" textLength="67" lengthAdjust="spacing">4-H16-03*B</text>
<text x="298.75" y="376" font-size="11.2" fill="#e00000" textLength="160" lengthAdjust="spacing">4-H20-07*BB&lt;--(active bar)</text>
<text x="298.75" y="388.7" font-size="11.2" fill="#111" textLength="66.3" lengthAdjust="spacing">4-H16-06*B</text>
<text x="493.3" y="376" font-size="11.2" fill="#111" textLength="75" lengthAdjust="spacing">4-H20-11*BB</text>
<text x="493.3" y="388.7" font-size="11.2" fill="#111" textLength="67" lengthAdjust="spacing">4-H16-10*B</text>
<g shape-rendering="crispEdges" fill="none" stroke="#333">
<rect x="40.5" y="424" width="573" height="9.3" stroke-width="1.2"/>
<path d="M50.5 423.5V433.5M51.5 423.5V433.5M53.5 423.5V433.5M599.5 423.5V433.5M602.5 423.5V433.5M603.5 423.5V433.5" stroke-width="1"/>
</g>
<path d="M314.8 416.8H327.3V439.6H314.8M314.8 416.8L327.3 419.2M314.8 439.6L327.3 437.2" fill="none" stroke="#ff2020" stroke-width="1.3"/>
<path d="M43.5 484.0V574.6M46.5 487.8V574.6M49.5 491.6V574.6M52.5 495.3V574.6M55.5 499.0V574.6M58.5 502.7V574.6M61.5 506.3V574.6M64.5 509.9V574.6M67.5 513.4V574.6M70.5 516.9V574.6M73.5 520.4V574.6M76.5 523.8V574.6M79.5 527.2V574.6M82.5 530.5V574.6M85.5 533.8V574.6M88.5 537.1V574.6M91.5 540.3V574.6M94.5 543.5V574.6M97.5 546.6V574.6M100.5 549.7V574.6M103.5 552.8V574.6M106.5 555.8V574.6M109.5 558.7V574.6M112.5 561.7V574.6M115.5 564.6V574.6M118.5 567.4V574.6M121.5 570.2V574.6M124.5 573.0V574.6M127.5 575.7V574.6M130.5 578.4V574.6M133.5 581.1V574.6M136.5 583.7V574.6M139.5 586.2V574.6M142.5 588.8V574.6M145.5 591.2V574.6M148.5 593.7V574.6M151.5 596.1V574.6M154.5 598.5V574.6M157.5 600.8V574.6M160.5 603.1V574.6M163.5 605.3V574.6M166.5 607.5V574.6M169.5 609.7V574.6M172.5 611.8V574.6M175.5 613.9V574.6M178.5 615.9V574.6M181.5 617.9V574.6M184.5 619.8V574.6M187.5 621.8V574.6M190.5 623.6V574.6M193.5 625.5V574.6M196.5 627.3V574.6M199.5 629.0V574.6M202.5 630.7V574.6M205.5 632.4V574.6M208.5 634.0V574.6M211.5 635.6V574.6M214.5 637.2V574.6M217.5 638.7V574.6M220.5 640.2V574.6M223.5 641.6V574.6M226.5 643.0V574.6M229.5 644.3V574.6M232.5 645.6V574.6M235.5 646.9V574.6M238.5 648.1V574.6M241.5 649.3V574.6M244.5 650.5V574.6M247.5 651.6V574.6M250.5 652.6V574.6M253.5 653.6V574.6M256.5 654.6V574.6M259.5 655.6V574.6M262.5 656.5V574.6M265.5 657.3V574.6M268.5 658.1V574.6M271.5 658.9V574.6M274.5 659.7V574.6M277.5 660.4V574.6M280.5 661.0V574.6M283.5 661.6V574.6M286.5 662.2V574.6M289.5 662.7V574.6M292.5 663.2V574.6M295.5 663.7V574.6M298.5 664.1V574.6M301.5 664.5V574.6M304.5 664.8V574.6M307.5 665.1V574.6M310.5 665.3V574.6M313.5 665.6V574.6M316.5 665.7V574.6M319.5 665.9V574.6M322.5 665.9V574.6M325.5 666.0V574.6M328.5 666.0V574.6M331.5 666.0V574.6M334.5 665.9V574.6M337.5 665.8V574.6M340.5 665.6V574.6M343.5 665.4V574.6M346.5 665.2V574.6M349.5 664.9V574.6M352.5 664.6V574.6M355.5 664.2V574.6M358.5 663.8V574.6M361.5 663.4V574.6M364.5 662.9V574.6M367.5 662.4V574.6M370.5 661.8V574.6M373.5 661.2V574.6M376.5 660.6V574.6M379.5 659.9V574.6M382.5 659.2V574.6M385.5 658.4V574.6M388.5 657.6V574.6M391.5 656.8V574.6M394.5 655.9V574.6M397.5 654.9V574.6M400.5 654.0V574.6M403.5 653.0V574.6M406.5 651.9V574.6M409.5 650.8V574.6M412.5 649.7V574.6M415.5 648.5V574.6M418.5 647.3V574.6M421.5 646.1V574.6M424.5 644.8V574.6M427.5 643.4V574.6M430.5 642.1V574.6M433.5 640.6V574.6M436.5 639.2V574.6M439.5 637.7V574.6M442.5 636.2V574.6M445.5 634.6V574.6M448.5 633.0V574.6M451.5 631.3V574.6M454.5 629.6V574.6M457.5 627.9V574.6M460.5 626.1V574.6M463.5 624.3V574.6M466.5 622.4V574.6M469.5 620.5V574.6M472.5 618.5V574.6M475.5 616.6V574.6M478.5 614.5V574.6M481.5 612.5V574.6M484.5 610.4V574.6M487.5 608.2V574.6M490.5 606.0V574.6M493.5 603.8V574.6M496.5 601.5V574.6M499.5 599.2V574.6M502.5 596.9V574.6M505.5 594.5V574.6M508.5 592.1V574.6M511.5 589.6V574.6M514.5 587.1V574.6M517.5 584.5V574.6M520.5 581.9V574.6M523.5 579.3V574.6M526.5 576.6V574.6M529.5 573.9V574.6M532.5 571.1V574.6M535.5 568.4V574.6M538.5 565.5V574.6M541.5 562.6V574.6M544.5 559.7V574.6M547.5 556.8V574.6M550.5 553.8V574.6M553.5 550.7V574.6M556.5 547.6V574.6M559.5 544.5V574.6M562.5 541.4V574.6M565.5 538.2V574.6M568.5 534.9V574.6M571.5 531.6V574.6M574.5 528.3V574.6M577.5 524.9V574.6M580.5 521.5V574.6M583.5 518.1V574.6M586.5 514.6V574.6M589.5 511.1V574.6M592.5 507.5V574.6M595.5 503.9V574.6M598.5 500.2V574.6M601.5 496.6V574.6M604.5 492.8V574.6M607.5 489.1V574.6M610.5 485.2V574.6" stroke="#5252aa" stroke-width="1" shape-rendering="crispEdges"/>
<polyline points="40.5,480.7 47.7,489.9 54.8,498.8 62.0,507.5 69.2,515.9 76.3,524.2 83.5,532.1 90.6,539.9 97.8,547.4 105.0,554.7 112.1,561.8 119.3,568.6 126.5,575.2 133.6,581.6 140.8,587.7 147.9,593.6 155.1,599.3 162.3,604.7 169.4,610.0 176.6,614.9 183.8,619.7 190.9,624.2 198.1,628.5 205.2,632.5 212.4,636.4 219.6,639.9 226.7,643.3 233.9,646.4 241.1,649.3 248.2,652.0 255.4,654.4 262.5,656.6 269.7,658.6 276.9,660.3 284.0,661.8 291.2,663.1 298.4,664.1 305.5,665.0 312.7,665.5 319.8,665.9 327.0,666.0 334.2,665.9 341.3,665.5 348.5,665.0 355.6,664.1 362.8,663.1 370.0,661.8 377.1,660.3 384.3,658.6 391.5,656.6 398.6,654.4 405.8,652.0 412.9,649.3 420.1,646.4 427.3,643.3 434.4,639.9 441.6,636.4 448.8,632.5 455.9,628.5 463.1,624.2 470.2,619.7 477.4,614.9 484.6,610.0 491.7,604.7 498.9,599.3 506.1,593.6 513.2,587.7 520.4,581.6 527.5,575.2 534.7,568.6 541.9,561.8 549.0,554.7 556.2,547.4 563.4,539.9 570.5,532.1 577.7,524.2 584.9,515.9 592.0,507.5 599.2,498.8 606.3,489.9 613.5,480.7" fill="none" stroke="#000080" stroke-width="1.3"/>
<g shape-rendering="crispEdges">
<path d="M40.5 574.6H613.5" stroke="#000080" stroke-width="1.3"/>
<path d="M40.5 466V685.5M613.5 466V686" stroke="#2a2a9a" stroke-width="1"/>
<path d="M40.5 480V575M613.5 480V575" stroke="#000080" stroke-width="2"/>
<path d="M40.5 466.5H55.5V458.5H156.5V484.5H497.5V458.5H598.5V466.5H613.5" fill="none" stroke="#ff2020" stroke-width="1"/>
<path d="M40.5 685.5H55.5V686.5H91.5V695.5M117.5 695.5V686.5H159.5V687.5H317M339 687.5H494.5V686.5H536.5V695.5M563.5 695.5V686.5H598.5V685.5H613.5" fill="none" stroke="#ff2020" stroke-width="1"/>
<path d="M91.5 695.5H117.5M536.5 695.5H563.5" stroke="#008000" stroke-width="1"/>
<path d="M269.3 454.5H288.7M368.5 454.5H384.7" stroke="#ff3030" stroke-width="1"/>
<path d="M269 469.5H292M366 469.5H384.5" stroke="#000080" stroke-width="1"/>
</g>
<text x="290.5" y="458.3" font-size="9.5" fill="#ff2020" textLength="72.3" lengthAdjust="spacingAndGlyphs">Moment Capacity</text>
<text x="294.4" y="472.6" font-size="9.5" fill="#000080" textLength="65" lengthAdjust="spacingAndGlyphs">Moment Applied</text>
<text x="14.8" y="485.1" font-size="9.3" fill="#ff2020" textLength="14.9" lengthAdjust="spacingAndGlyphs">506</text>
<text x="24.7" y="583.5" font-size="9.3" fill="#ff2020">3</text>
<text x="15" y="686.3" font-size="9.3" fill="#ff2020" textLength="14.7" lengthAdjust="spacingAndGlyphs">520</text>
<text x="620.9" y="484.8" font-size="9.3" fill="#ff2020" textLength="15" lengthAdjust="spacingAndGlyphs">506</text>
<text x="620.6" y="687.4" font-size="9.3" fill="#ff2020" textLength="15.2" lengthAdjust="spacingAndGlyphs">520</text>
<text x="327.3" y="503.2" font-size="9.5" fill="#ff2020" text-anchor="middle">424</text>
<rect x="317" y="664.5" width="22" height="10" fill="#fff"/>
<text x="327.3" y="673.3" font-size="9.5" fill="#000080" text-anchor="middle">431</text>
<text x="327.3" y="688.4" font-size="9.5" fill="#ff2020" text-anchor="middle">528</text>
<text x="14" y="739" font-size="10.8" fill="#ff0000" textLength="401" lengthAdjust="spacingAndGlyphs">* Bar mark numbers displayed on screen are local and for curtailment guidence only.</text>
<rect x="651" y="179" width="628.5" height="567.5" fill="#fff"/>
<path d="M664 180L676 192H673V205H665.3V199H662.7V205H655V192H652Z" fill="#808080"/>
<path d="M714 294V575.7M785.5 226.5V513.7M1145 411.7V699.6M1216 351.3V639" stroke="#7a7a7a" stroke-width="1.5"/>
<defs><linearGradient id="g3a" gradientUnits="userSpaceOnUse" x1="785" y1="0" x2="1216" y2="0"><stop offset="0" stop-color="#222"/><stop offset="0.2" stop-color="#2a2a70"/><stop offset="0.33" stop-color="#2020a0"/><stop offset="0.55" stop-color="#222"/><stop offset="1" stop-color="#222"/></linearGradient><linearGradient id="g3b" gradientUnits="userSpaceOnUse" x1="737" y1="0" x2="1145" y2="0"><stop offset="0" stop-color="#2020a0"/><stop offset="0.3" stop-color="#2020a0"/><stop offset="0.52" stop-color="#222"/><stop offset="0.65" stop-color="#222"/><stop offset="1" stop-color="#2020a0"/></linearGradient><linearGradient id="g3c" gradientUnits="userSpaceOnUse" x1="785" y1="0" x2="1216" y2="0"><stop offset="0" stop-color="#2020a0"/><stop offset="0.3" stop-color="#2020a0"/><stop offset="0.45" stop-color="#222"/><stop offset="1" stop-color="#222"/></linearGradient></defs>
<path d="M1216 351.3L1145 411.7M785.5 226.5L767 241.5M928.5 267.9L858.3 329M1071.9 309.2L1001.7 370.3" fill="none" stroke="#222" stroke-width="1.25"/>
<path d="M785.5 226.5L1216 351.3" stroke="url(#g3a)" stroke-width="1.25"/>
<path d="M737 297L1145 411.7" stroke="url(#g3b)" stroke-width="1.25"/>
<path d="M1216 494.3L1150 551M785.5 370.3L731 415.8M928.5 411.7L875.6 458M1071.9 453L1018.2 499.3" fill="none" stroke="#222" stroke-width="1.25"/>
<path d="M785.5 370.3L1216 494.3" stroke="url(#g3c)" stroke-width="1.25"/>
<path d="M709.1 420.7L718.6 413.3L1149.6 538.5L1140 544.7Z" fill="#cc0000" stroke="#a00000" stroke-width="0.6"/>
<path d="M709.1 420.7L1140 544.7V573.6L709.1 449.7Z" fill="#cc0000" stroke="#8a0000" stroke-width="0.7"/>
<path d="M1140 544.7L1149.6 538.5V567.4L1140 573.6Z" fill="#6e0000"/>
<path d="M709.1 420.7L1140 544.7" stroke="#4a1515" stroke-width="1.1"/>
<path d="M714.5 431.9L857 472.4" stroke="#ff1010" stroke-width="1.5"/>
<path d="M684.4 233.3L715.3 207.2L767.1 222.8L767.6 274.9L737.1 300.4L684.4 285.6Z" fill="#b3b3b3" stroke="#9a9a9a" stroke-width="1"/>
<path d="M684.4 233.3L737.1 247.3L767.1 222.8M737.1 247.3V300.4" fill="none" stroke="#9a9a9a" stroke-width="1"/>
<text x="0" y="0" font-size="14.5" fill="#111" transform="matrix(1 0.25 0 1 693 268)" textLength="33.5" lengthAdjust="spacingAndGlyphs">Front</text>
<text x="0" y="0" font-size="13" font-style="italic" text-anchor="middle" fill="#111" transform="matrix(0.994 0.264 -0.583 0.492 723.7 229.6)">Top</text>
<text x="0" y="0" font-size="12" font-style="italic" fill="#111" transform="matrix(0.75 -0.62 0 1 742 276)">Right</text>
<path d="M1209 676.6V638M1209 676.6L1231 658M1209 676.6L1247 687.5" fill="none" stroke-width="1.3" stroke="none"/>
<path d="M1209 676.6V638" stroke="#3a9a3a" stroke-width="1.3"/><path d="M1206.5 640L1209 633.5L1211.5 640Z" fill="#006400"/>
<path d="M1209 676.6L1231 658" stroke="#1a1aff" stroke-width="1.3"/><path d="M1229 655L1235 654.5L1232 660Z" fill="#0000b0"/>
<path d="M1209 676.6L1248 687.5" stroke="#ff2020" stroke-width="1.3"/><path d="M1246 684.5L1253 689.5L1245.5 690Z" fill="#d00000"/>
<text x="1213" y="645" font-size="9.5" fill="#222">Y</text>
<text x="1237.5" y="666" font-size="10" fill="#222">Z</text>
<text x="1255.5" y="700" font-size="10" fill="#222">X</text>
<rect x="35" y="776" width="1246" height="1" fill="#fff"/>
<rect x="8" y="751" width="26.5" height="184" rx="3" fill="#f7f7f7"/>
<rect x="39" y="756" width="52.7" height="20" fill="url(#tabgrad)"/>
<text x="50.1" y="770.8" font-size="12" fill="#000" textLength="27" lengthAdjust="spacingAndGlyphs">Briefs</text>
<rect x="95" y="756" width="80" height="20" fill="url(#tabgrad)"/>
<text x="107.2" y="770.8" font-size="12" fill="#000" textLength="51.8" lengthAdjust="spacingAndGlyphs">Beam Data</text>
<rect x="177.7" y="756" width="94.30000000000001" height="20" fill="url(#tabgrad)"/>
<text x="195" y="770.8" font-size="12" fill="#000" textLength="56" lengthAdjust="spacingAndGlyphs">Links &amp; Nibs</text>
<rect x="275" y="756" width="93" height="20" fill="url(#tabgrad)"/>
<text x="287" y="770.8" font-size="12" fill="#000" textLength="66" lengthAdjust="spacingAndGlyphs">Redistribution</text>
<rect x="370.7" y="756" width="96.5" height="21" fill="#fff"/>
<text x="384.3" y="773" font-size="12" fill="#000" textLength="68.7" lengthAdjust="spacingAndGlyphs">Super Member</text>
<rect x="601" y="753" width="20" height="19" fill="url(#btngrad)"/>
<rect x="624" y="753" width="20" height="19" fill="url(#btngrad)"/>
<path d="M607 763.5L611.5 759V761.5H616V766H611.5V768.5Z" fill="url(#arrowgrad)"/>
<path d="M639 763.5L634.5 759V761.5H630V766H634.5V768.5Z" fill="url(#arrowgrad)"/>
<path d="M50 811.5V786Q50 782 54 782H408Q412 782 412 786V811.5Z" fill="url(#subgrad)"/>
<text x="61.7" y="801" font-size="12" fill="#6d6d6d" textLength="38.7" lengthAdjust="spacingAndGlyphs">Analysis</text>
<rect x="114.5" y="783.5" width="62.8" height="27" fill="none" stroke="#3a8ee6" stroke-width="1.2"/>
<text x="128.5" y="801" font-size="12" fill="#6d6d6d" textLength="32" lengthAdjust="spacingAndGlyphs">Design</text>
<text x="189" y="801" font-size="12" fill="#6d6d6d" textLength="39.2" lengthAdjust="spacingAndGlyphs">Drafting</text>
<rect x="55" y="824.5" width="15" height="20.5" fill="#f5f5f5"/>
<path d="M58.5 832L62 828.5L65.5 832M58.5 838L62 841.5L65.5 838" fill="none" stroke="#4a5a80" stroke-width="1.4"/>
<rect x="73.5" y="824.5" width="325" height="20.5" fill="#e3e3e3" stroke="#adadad" stroke-width="1"/>
<text x="76.7" y="838.5" font-size="12" fill="#000" textLength="95.8" lengthAdjust="spacingAndGlyphs">00001 00002 00003</text>
<path d="M385.5 832.5L390 837L394.5 832.5" fill="none" stroke="#444" stroke-width="1.1"/>
<rect x="400" y="824.5" width="12" height="20.5" fill="#f5f5f5"/>
<path d="M403.5 832L407 828.5L410.5 832M403.5 838L407 841.5L410.5 838" fill="none" stroke="#4a5a80" stroke-width="1.4"/>
<path d="M50 885.5V860Q50 857 53 857H409Q412 857 412 860V885.5Z" fill="url(#subgrad)"/>
<path d="M411.5 875V885" stroke="#999" stroke-width="1"/>
<path d="M57 870H70M63.5 863.5V876M57 880H70" stroke="#404040" stroke-width="1.8"/>
<rect x="78.5" y="858.5" width="27" height="27" fill="none" stroke="#2a7fd8" stroke-width="1.2"/>
<circle cx="94" cy="869" r="7" fill="none" stroke="#404040" stroke-width="2.2"/><path d="M89 874L83 880" stroke="#404040" stroke-width="3" stroke-linecap="round"/>
<path d="M110.5 863V880" stroke="#c8c8c8" stroke-width="1"/>
<path d="M117 871H137M127 861V881" stroke="#404040" stroke-width="3.5"/>
<path d="M145.5 873.5L156 863L164 871L153.5 881.5H149L145.5 878Z M150 869L158 877" fill="none" stroke="#404040" stroke-width="2"/><path d="M153 881H164" stroke="#404040" stroke-width="2"/>
<path d="M173.5 873.5L184 863L192 871L181.5 881.5H177L173.5 878Z" fill="none" stroke="#404040" stroke-width="2"/><path d="M178 869L184 863L192 871L186 877Z" fill="#404040"/><path d="M181 881H192" stroke="#404040" stroke-width="2"/>
<path d="M203.5 864.5H218.5M208 864.5V861.5H214V864.5M205.5 866.5L207 881H215L216.5 866.5M209 869V879M213 869V879" fill="none" stroke="#404040" stroke-width="2"/>
<path d="M231.5 864.5H246.5M236 864.5V861.5H242V864.5" fill="none" stroke="#404040" stroke-width="2"/><path d="M233 866H245L243.5 881.5H234.5Z" fill="#404040"/>
<path d="M73 901.5V913.5L62.7 907.5Z" fill="#404040"/>
<path d="M97 901.5V913.5L107.6 907.5Z" fill="#404040"/>
<path d="M85.5 898V919.5M119.5 898V919.5" stroke="#bdbdbd" stroke-width="1"/>
<text x="125" y="910.8" font-size="12" fill="#000" textLength="77" lengthAdjust="spacingAndGlyphs">Member 1 of 4</text>
<path d="M411.5 887.5V912" stroke="#d0d0d0" stroke-width="1"/>
<path d="M50 932V928.3Q50 925.3 53 925.3H409Q412 925.3 412 928.3V932Z" fill="#fafafa"/>
<path d="M114.7 931.3H136.5M143.3 931.3H164.8M171 931.3H193" stroke="#404040" stroke-width="2"/>
<path d="M209.8 931.5H218.4" stroke="#a0a0a0" stroke-width="1.2"/>
<path d="M63 931.3H65M90.3 931.3H92.3" stroke="#b01820" stroke-width="1.5"/>
<path d="M34.5 928V935" stroke="#b0b0b0" stroke-width="1"/>
<rect x="14.5" y="761" width="13" height="10" fill="#dfe8f5" stroke="#4a6a9a" stroke-width="1"/><path d="M16 765H26M16 767.5H26" stroke="#7d98c0" stroke-width="0.8"/><path d="M17 763L22.5 757.5L28 759V762L22 766Z" fill="#e9bb4a" stroke="#9a7a20" stroke-width="0.6"/><rect x="27" y="757" width="2" height="6" fill="#3aa03a"/>
<path d="M17.4 782.2H23.6L19 788.1H23.6L14 797.8L17.4 790.6H12Z" fill="#ffe400" stroke="#111" stroke-width="1"/>
<text x="23.5" y="798.0" font-size="11.5" fill="#0000ff" font-family="Liberation Serif">1</text>
<path d="M17.4 809.0H23.6L19 814.9H23.6L14 824.5999999999999L17.4 817.4H12Z" fill="#ffe400" stroke="#111" stroke-width="1"/>
<text x="23.5" y="824.8" font-size="11.5" fill="#0000ff" font-family="Liberation Serif">R</text>
<path d="M17.4 835.8000000000001H23.6L19 841.7H23.6L14 851.4L17.4 844.2H12Z" fill="#ffe400" stroke="#111" stroke-width="1"/>
<text x="23.5" y="851.6" font-size="11.5" fill="#0000ff" font-family="Liberation Serif">V</text>
<path d="M14 867V876L18.5 871.5Z" fill="#8a1aa0"/>
<text x="20" y="876" font-size="11" fill="#8a1aa0" font-weight="bold">F</text>
<rect x="14.5" y="892.5" width="11" height="13" fill="#fff" stroke="#4a6a9a" stroke-width="1"/><circle cx="21" cy="898.5" r="4" fill="#dfeefa" stroke="#555" stroke-width="1"/><path d="M24 902L28.5 906" stroke="#e0902a" stroke-width="2.2"/>
<path d="M17 923.5L25 930.5M25 923.5L17 930.5" stroke="#000" stroke-width="1.6"/>
<rect x="1" y="938" width="1281" height="1" fill="#d9d9d9"/>
<text x="15" y="953.8" font-size="12" fill="#000" textLength="86" lengthAdjust="spacingAndGlyphs">View: Full Frame</text>
<rect x="223.5" y="941.5" width="127" height="15.5" fill="#e6e6e6" stroke="#bcbcbc" stroke-width="1"/>
<path d="M359.2 943.5H368.2L366.2 948.8H357.2Z" fill="#eef2f8" stroke="#5a7394" stroke-width="0.9"/><path d="M359.5 945.3H365.8M358.8 947.1H365" stroke="#8fa3bd" stroke-width="0.6"/>
<rect x="354.6" y="948.6" width="14" height="8" rx="1.6" fill="#eef1f6" stroke="#51688a" stroke-width="1"/><rect x="355.2" y="954.3" width="12.8" height="2" fill="#8197b5"/><rect x="363" y="952" width="3" height="2.9" fill="#12cc12"/>
<path d="M374.8 947.9H382.1L378.45 952Z" fill="#111"/>
<text x="397.6" y="954.4" font-size="12" fill="#000" textLength="98" lengthAdjust="spacingAndGlyphs">PDF session closed</text>
<rect x="1277" y="947" width="2" height="2" fill="#a8a8a8"/>
<rect x="1273" y="951" width="2" height="2" fill="#a8a8a8"/>
<rect x="1277" y="951" width="2" height="2" fill="#a8a8a8"/>
<rect x="1269" y="955" width="2" height="2" fill="#a8a8a8"/>
<rect x="1273" y="955" width="2" height="2" fill="#a8a8a8"/>
<rect x="1277" y="955" width="2" height="2" fill="#a8a8a8"/>
</svg>
</body></html>
